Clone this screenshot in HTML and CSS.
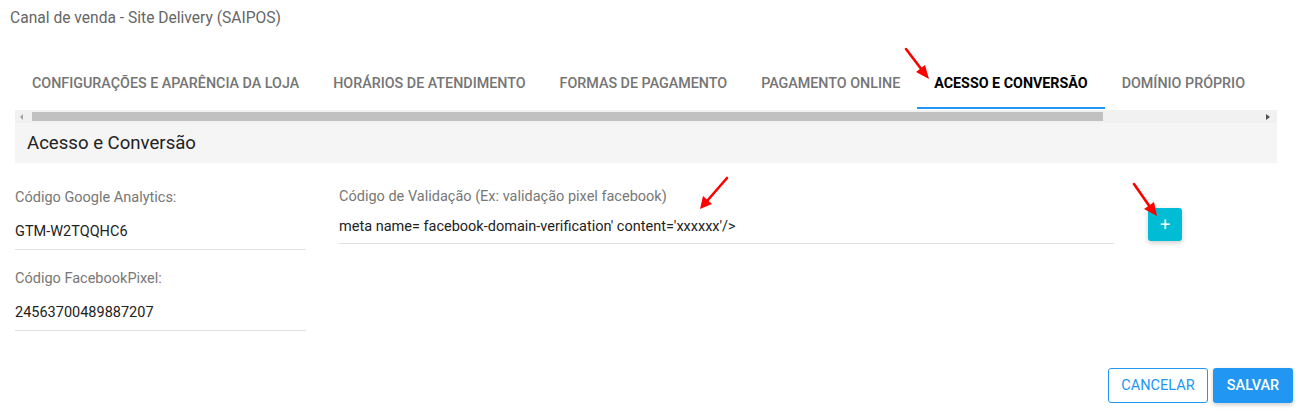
FILE: index.html
```html
<!DOCTYPE html>
<html lang="pt-BR">

<head>
    <meta charset="UTF-8">
    <meta name="viewport" content="width=device-width, initial-scale=1.0">
    <title>Canal de venda - Site Delivery</title>
    <link rel="stylesheet" href="styles.css">
</head>

<body>
    <div class="page">
        <div class="title">Canal de venda - Site Delivery (SAIPOS)</div>

        <!-- Tabs -->
        <div class="tabs-wrap">
            <div class="tabs">
                <div class="tab">Configurações e aparência da loja</div>
                <div class="tab">Horários de atendimento</div>
                <div class="tab">Formas de pagamento</div>
                <div class="tab">Pagamento online</div>
                <div class="tab active">Acesso e conversão</div>
                <div class="tab">Domínio próprio</div>
                <div class="tab warn">Cardápio</div>
            </div>
            <div class="scrollbar">
                <span class="arrow left"></span>
                <div class="track"><div class="thumb"></div></div>
                <span class="arrow right"></span>
            </div>
        </div>

        <div class="panel-head">Acesso e Conversão</div>

        <!-- Form -->
        <div class="form">
            <div class="col-left">
                <div class="field">
                    <label>Código Google Analytics:</label>
                    <div class="value">GTM-W2TQQHC6</div>
                </div>
                <div class="field">
                    <label>Código FacebookPixel:</label>
                    <div class="value">24563700489887207</div>
                </div>
            </div>
            <div class="col-mid">
                <div class="field compact">
                    <label>Código de Validação (Ex: validação pixel facebook)</label>
                    <div class="value">meta name= facebook-domain-verification' content='xxxxxx'/&gt;</div>
                </div>
            </div>
            <div class="col-btn">
                <button class="btn-add">+</button>
            </div>
        </div>

        <div class="actions">
            <button class="btn btn-outline">Cancelar</button>
            <button class="btn btn-primary">Salvar</button>
        </div>

        <!-- annotation arrows -->
        <svg class="marks" width="1302" height="413" viewBox="0 0 1302 413">
            <g stroke="#f00" stroke-width="2.6" stroke-linecap="round">
                <line x1="906" y1="49" x2="922" y2="70"/>
                <line x1="727" y1="178" x2="707" y2="201"/>
                <line x1="1134" y1="184" x2="1150" y2="207"/>
            </g>
            <g fill="#f00">
                <polygon points="929,79 916,72 925,65"/>
                <polygon points="700,209 703,196 712,204"/>
                <polygon points="1157,216 1144,209 1154,202"/>
            </g>
        </svg>
    </div>
</body>

</html>
```

FILE: styles.css
```css
body {
    margin: 0;
    font-family: Roboto, "Liberation Sans", Arial, sans-serif;
    background: #fff;
    color: #222;
}

.page {
    position: relative;
    width: 1302px;
    height: 413px;
    box-sizing: border-box;
    padding: 0 9px 0 15px;
    overflow: hidden;
}

.title {
    margin-left: -5px;
    padding-top: 9px;
    line-height: 18px;
    font-size: 15.6px;
    color: #666;
}

.tabs-wrap {
    margin-top: 32px;
    margin-right: 16px;
}

.tabs {
    display: flex;
    overflow: hidden;
    white-space: nowrap;
}

.tab {
    flex: none;
    padding: 0 17px;
    height: 48px;
    line-height: 48px;
    border-bottom: 2px solid transparent;
    font-size: 14.3px;
    font-weight: 500;
    text-transform: uppercase;
    color: #757575;
}

.tab.active {
    color: #000;
    font-weight: 700;
    border-bottom-color: #2196f3;
}

.tab.warn {
    color: #f5a623;
}

.scrollbar {
    display: flex;
    align-items: center;
    height: 13px;
    margin-top: 1px;
    background: #f1f1f1;
}

.arrow {
    width: 17px;
    height: 13px;
    position: relative;
}

.arrow::after {
    content: "";
    position: absolute;
    top: 4px;
    border-top: 3px solid transparent;
    border-bottom: 3px solid transparent;
}

.arrow.left::after {
    left: 5px;
    border-right: 3px solid #a3a3a3;
}

.arrow.right::after {
    left: 6px;
    border-left: 4px solid #505050;
}

.track {
    flex: 1;
    height: 9px;
}

.thumb {
    width: 1071px;
    height: 9px;
    background: #c1c1c1;
}

.panel-head {
    margin-right: 16px;
    height: 40px;
    line-height: 40px;
    padding-left: 12px;
    background: #f5f5f5;
    font-size: 18.6px;
    color: #222;
}

.form {
    display: flex;
    padding-top: 25px;
    margin-right: 16px;
}

.col-left {
    width: 291px;
}

.col-mid {
    width: 775px;
    margin-left: 33px;
    margin-top: -1px;
}

.col-btn {
    margin-left: 34px;
    padding-top: 20px;
}

.field {
    height: 81px;
}

.field label {
    display: block;
    font-size: 14.5px;
    line-height: 20px;
    color: #777;
}

.field .value {
    margin-top: 14px;
    padding-bottom: 7px;
    line-height: 20px;
    font-size: 14.5px;
    color: #222;
    border-bottom: 1px solid #e0e0e0;
}

.field.compact .value {
    margin-top: 10px;
    padding-bottom: 6px;
}

.btn-add {
    width: 34px;
    height: 33px;
    border: none;
    border-radius: 3px;
    background: #00bcd4;
    color: #fff;
    font-size: 18px;
    font-family: inherit;
    line-height: 1;
    padding: 0;
    box-shadow: 0 2px 5px rgba(0, 0, 0, 0.2);
}

.actions {
    display: flex;
    justify-content: flex-end;
    gap: 5px;
    margin-top: 18px;
}

.btn {
    height: 35px;
    border-radius: 3px;
    font-family: inherit;
    font-size: 14.5px;
    text-transform: uppercase;
    box-sizing: border-box;
    padding: 0;
}

.btn-outline {
    width: 100px;
    border: 1px solid #2196f3;
    background: #fff;
    color: #2196f3;
}

.btn-primary {
    width: 80px;
    border: none;
    background: #2196f3;
    color: #fff;
    font-weight: 500;
    box-shadow: 0 2px 4px rgba(0, 0, 0, 0.2);
}

.marks {
    position: absolute;
    left: 0;
    top: 0;
    pointer-events: none;
}
```
